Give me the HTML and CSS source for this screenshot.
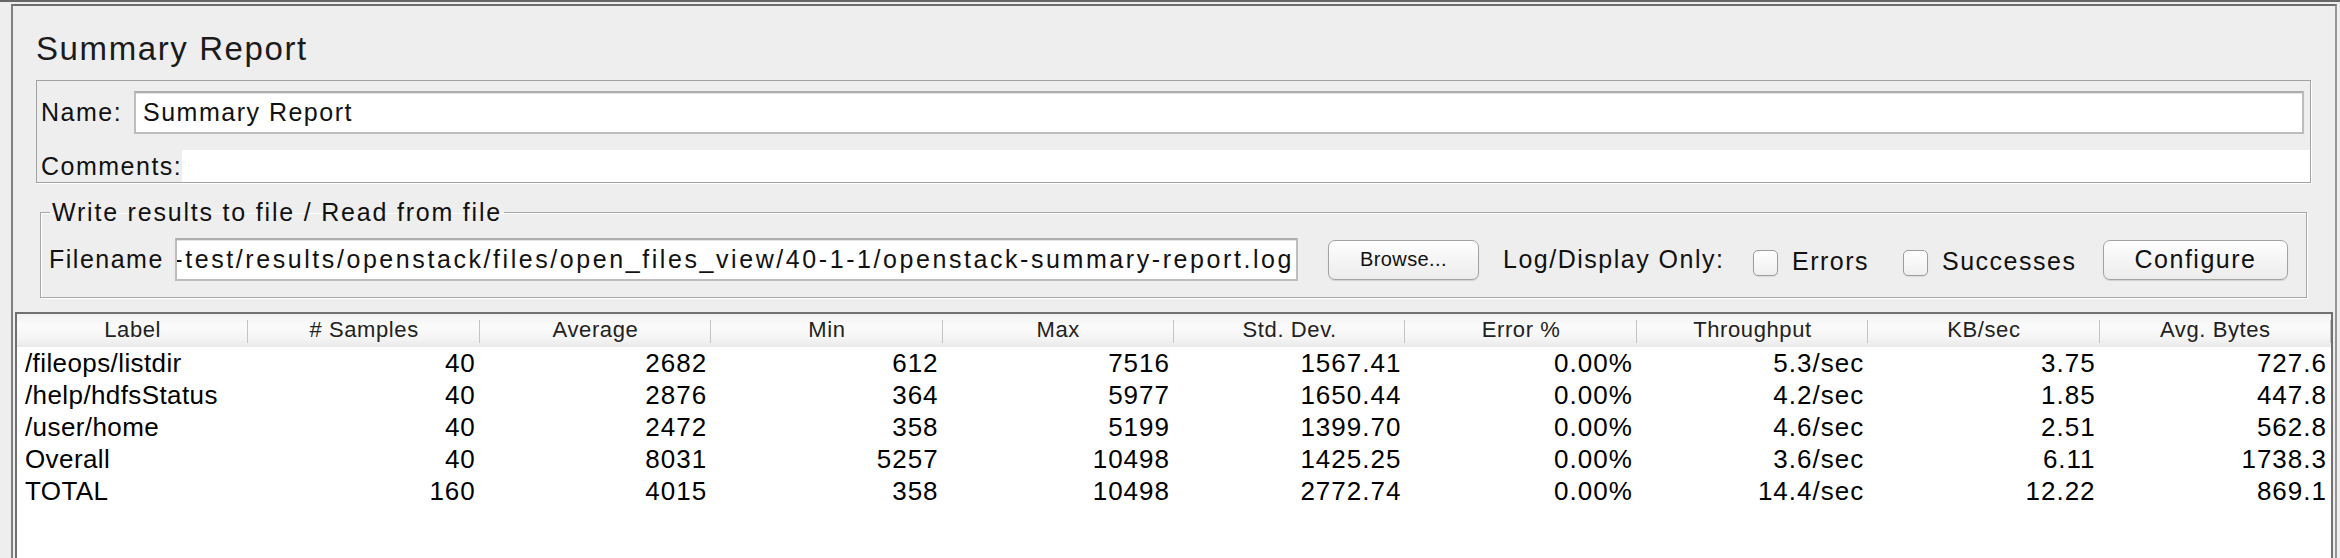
FILE: index.html
```html
<!DOCTYPE html>
<html>
<head>
<meta charset="utf-8">
<title>Summary Report</title>
<link rel="stylesheet" href="styles.css">
</head>
<body>
<div class="topline"></div>
<div class="panel">
  <div class="title">Summary Report</div>

  <div class="namebox">
    <div class="name-row">
      <span class="lbl name-lbl">Name:</span>
      <div class="field name-field">Summary Report</div>
    </div>
    <div class="comments-row">
      <span class="lbl comments-lbl">Comments:</span>
      <div class="comments-area"></div>
    </div>
  </div>

  <fieldset class="fileset">
    <legend>Write results to file / Read from file</legend>
    <div class="file-row">
      <span class="lbl file-lbl">Filename</span>
      <div class="field file-field"><span class="path">-test/results/openstack/files/open_files_view/40-1-1/openstack-summary-report.log</span></div>
      <button class="btn btn-browse">Browse...</button>
      <span class="lbl log-lbl">Log/Display Only:</span>
      <span class="check"></span>
      <span class="lbl errors-lbl">Errors</span>
      <span class="check"></span>
      <span class="lbl succ-lbl">Successes</span>
      <button class="btn btn-config">Configure</button>
    </div>
  </fieldset>

  <div class="table">
    <div class="thead">
      <div class="th">Label</div>
      <div class="th"># Samples</div>
      <div class="th">Average</div>
      <div class="th">Min</div>
      <div class="th">Max</div>
      <div class="th">Std. Dev.</div>
      <div class="th">Error %</div>
      <div class="th">Throughput</div>
      <div class="th">KB/sec</div>
      <div class="th">Avg. Bytes</div>
    </div>
    <div class="tr">
      <div class="td l">/fileops/listdir</div><div class="td">40</div><div class="td">2682</div><div class="td">612</div><div class="td">7516</div><div class="td">1567.41</div><div class="td">0.00%</div><div class="td">5.3/sec</div><div class="td">3.75</div><div class="td">727.6</div>
    </div>
    <div class="tr">
      <div class="td l">/help/hdfsStatus</div><div class="td">40</div><div class="td">2876</div><div class="td">364</div><div class="td">5977</div><div class="td">1650.44</div><div class="td">0.00%</div><div class="td">4.2/sec</div><div class="td">1.85</div><div class="td">447.8</div>
    </div>
    <div class="tr">
      <div class="td l">/user/home</div><div class="td">40</div><div class="td">2472</div><div class="td">358</div><div class="td">5199</div><div class="td">1399.70</div><div class="td">0.00%</div><div class="td">4.6/sec</div><div class="td">2.51</div><div class="td">562.8</div>
    </div>
    <div class="tr">
      <div class="td l">Overall</div><div class="td">40</div><div class="td">8031</div><div class="td">5257</div><div class="td">10498</div><div class="td">1425.25</div><div class="td">0.00%</div><div class="td">3.6/sec</div><div class="td">6.11</div><div class="td">1738.3</div>
    </div>
    <div class="tr">
      <div class="td l">TOTAL</div><div class="td">160</div><div class="td">4015</div><div class="td">358</div><div class="td">10498</div><div class="td">2772.74</div><div class="td">0.00%</div><div class="td">14.4/sec</div><div class="td">12.22</div><div class="td">869.1</div>
    </div>
  </div>
</div>
</body>
</html>
```

FILE: styles.css
```css
* { box-sizing: border-box; }
html, body { margin: 0; padding: 0; }
body {
  background: #eeeeee;
  font-family: "Liberation Sans", Arial, sans-serif;
  color: #111;
  width: 2340px;
  height: 558px;
  overflow: hidden;
}
.topline { height: 2px; background: #666666; margin-bottom: 2px; }
.panel {
  margin: 0 3px 0 11px;
  border-top: 2px solid #6e6e6e;
  border-left: 2px solid #808080;
  border-right: 2px solid #969696;
  height: 600px;
  padding-top: 22px;
  background: #eeeeee;
}
.title {
  font-size: 33px;
  line-height: 41px;
  letter-spacing: 1.6px;
  margin-left: 23px;
  color: #1b1b1b;
}
.lbl {
  font-size: 25px;
  letter-spacing: 1.5px;
  color: #111;
  white-space: nowrap;
  flex: none;
}
.namebox {
  margin: 11px 24px 0 23px;
  border: 1px solid #a2a2a2;
  box-shadow: 1px 1px 0 #ffffff;
  padding: 10px 0 0 4px;
}
.name-row { display: flex; align-items: center; margin-right: 6px; }
.name-lbl { width: 93px; }
.field {
  height: 43px;
  background: #ffffff;
  border: 2px solid #bdbdbd;
  border-top-color: #adadad;
  box-shadow: inset 0 1px 0 #e4e4e4;
  font-size: 25px;
  letter-spacing: 1.5px;
  color: #111;
  display: flex;
  align-items: center;
  white-space: nowrap;
}
.name-field { flex: 1; padding: 0 7px; }
.comments-row { display: flex; height: 32px; margin-top: 16px; }
.comments-lbl { width: 141px; display: flex; align-items: center; }
.comments-area { flex: 1; background: #ffffff; }

.fileset {
  margin: 14px 28px 0 27px;
  padding: 11px 17px 16px 8px;
  border: 1px solid #a6a6a6;
  box-shadow: inset 1px 1px 0 #ffffff, 1px 1px 0 #ffffff;
  min-width: 0;
}
.fileset legend {
  font-size: 25px;
  letter-spacing: 1.8px;
  line-height: 30px;
  padding: 0 2px;
  margin-left: 1px;
  color: #111;
}
.file-row { display: flex; align-items: center; height: 43px; }
.file-lbl { width: 126px; }
.file-field {
  width: 1123px;
  flex: none;
  justify-content: flex-end;
  overflow: hidden;
  padding: 0 2px;
}
.path { flex: none; letter-spacing: 2.57px; }
.btn {
  font-family: "Liberation Sans", Arial, sans-serif;
  color: #111;
  height: 40px;
  border: 1px solid #a3a3a3;
  border-radius: 7px;
  background: linear-gradient(#ffffff, #f3f3f3 60%, #ececec);
  box-shadow: 0 1px 1px rgba(0, 0, 0, 0.12);
  padding: 0;
  flex: none;
}
.btn-browse { margin-left: 30px; width: 151px; font-size: 20px; letter-spacing: 0.4px; }
.btn-config { width: 185px; font-size: 25px; letter-spacing: 1.5px; }
.log-lbl { margin-left: 24px; width: 250px; }
.check {
  width: 25px;
  height: 26px;
  flex: none;
  border: 1px solid #9c9c9c;
  border-radius: 5px;
  background: linear-gradient(#ffffff, #efefef);
  box-shadow: 0 1px 1px rgba(0, 0, 0, 0.08);
  margin-top: 6px;
}
.errors-lbl { margin-left: 14px; width: 111px; margin-top: 4px; }
.succ-lbl { margin-left: 14px; width: 161px; margin-top: 4px; }

.table {
  margin: 14px 2px 0 2px;
  border: 2px solid #707070;
  border-bottom: none;
  background: #ffffff;
  height: 280px;
}
.thead {
  display: grid;
  grid-template-columns: repeat(10, 1fr);
  height: 33px;
  background: linear-gradient(#f1f1f1, #fbfbfb 35%, #f4f4f4 75%, #e9e9e9);
}
.th {
  position: relative;
  font-size: 22px;
  letter-spacing: 0.6px;
  line-height: 32px;
  text-align: center;
  color: #222;
  white-space: nowrap;
}
.th::after {
  content: "";
  position: absolute;
  right: 0;
  top: 6px;
  width: 1px;
  height: 23px;
  background: #c4c4c4;
}
.tr {
  display: grid;
  grid-template-columns: repeat(10, 1fr);
  height: 32px;
}
.td {
  font-size: 26px;
  letter-spacing: 1px;
  line-height: 33px;
  text-align: right;
  padding-right: 4px;
  white-space: nowrap;
  overflow: hidden;
  color: #000;
}
.td.l { text-align: left; padding-left: 8px; padding-right: 0; letter-spacing: 0.4px; }
```
